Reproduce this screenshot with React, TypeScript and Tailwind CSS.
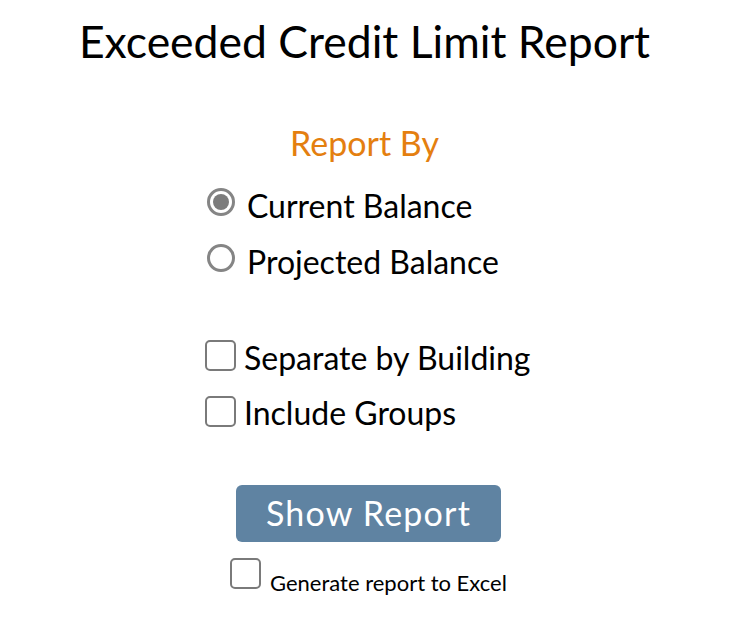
import React from "react";

function Radio({ checked }: { checked?: boolean }) {
  return (
    <span className="mt-[2px] w-[28px] h-[28px] rounded-full border-[3px] border-[#858585] bg-white flex items-center justify-center shrink-0">
      {checked && <span className="w-[16px] h-[16px] rounded-full bg-[#7c7c7c]" />}
    </span>
  );
}

function Box({ className = "" }: { className?: string }) {
  return (
    <span
      className={
        "w-[31px] h-[31px] rounded-[5px] border-[2.5px] border-[#7a7a7a] bg-white shrink-0 " + className
      }
    />
  );
}

export default function App() {
  return (
    <div className="w-[747px] h-[639px] bg-white text-black font-['Lato',sans-serif]">
      <div className="w-[729px] flex flex-col items-center">
        <h1 className="mt-[14px] text-[44.5px] leading-[53px]">Exceeded Credit Limit Report</h1>
        <div className="mt-[55px] text-[34px] leading-[41px] text-[#e47f10]">Report By</div>
        <div className="self-start ml-[205px] mt-[23px] flex flex-col">
          <div className="ml-[2px] flex items-start gap-[12px]">
            <Radio checked />
            <span className="text-[32px] leading-[40px]">Current Balance</span>
          </div>
          <div className="mt-[16px] ml-[2px] flex items-start gap-[12px]">
            <Radio />
            <span className="text-[32px] leading-[40px]">Projected Balance</span>
          </div>
          <div className="mt-[56px] flex items-start gap-[8px]">
            <Box className="mt-[2px]" />
            <span className="text-[32px] leading-[40px]">Separate by Building</span>
          </div>
          <div className="mt-[15px] flex items-start gap-[8px]">
            <Box className="mt-[3px]" />
            <span className="text-[32px] leading-[40px]">Include Groups</span>
          </div>
        </div>
        <button className="mt-[52px] ml-[8px] w-[265px] h-[57px] rounded-[6px] bg-[#5f83a2] text-white text-[34px] tracking-[1.2px] leading-none flex items-center justify-center pb-[2px]">
          Show Report
        </button>
        <div className="self-start ml-[230px] mt-[16px] flex items-end gap-[9px]">
          <Box />
          <span className="text-[22px] leading-[26px] mb-[-7px]">Generate report to Excel</span>
        </div>
      </div>
    </div>
  );
}
